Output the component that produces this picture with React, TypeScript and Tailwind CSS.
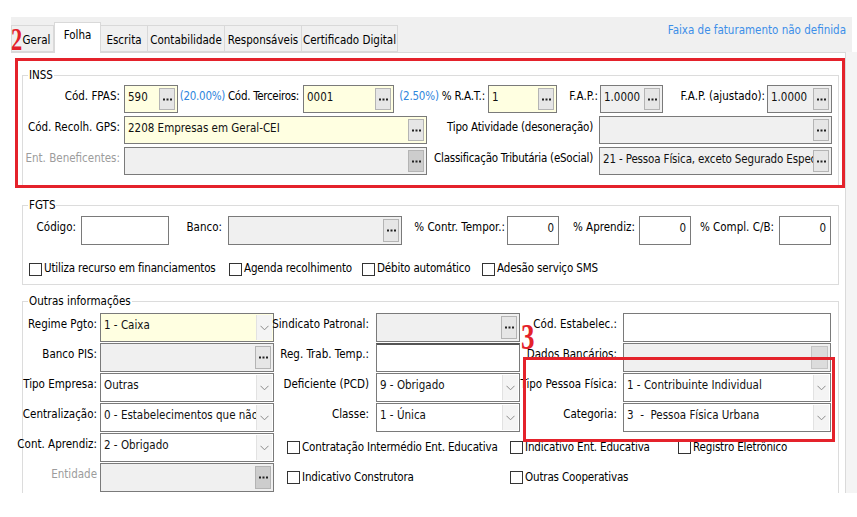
import React from "react";

type Kind = "yellow" | "white" | "off";
type Btn = "dots" | "dotsDark" | "arrow" | "blank" | undefined;

const bgMap: Record<Kind, string> = {
  yellow: "bg-[#ffffe1]",
  white: "bg-white",
  off: "bg-[#f0f0f0]",
};

function Dots() {
  return (
    <svg width="9" height="3" viewBox="0 0 9 3">
      <rect x="0" y="0.5" width="2" height="2" fill="#222" />
      <rect x="3.5" y="0.5" width="2" height="2" fill="#222" />
      <rect x="7" y="0.5" width="2" height="2" fill="#222" />
    </svg>
  );
}

function Chevron() {
  return (
    <svg width="9" height="6" viewBox="0 0 9 6">
      <polyline points="0.5,0.8 4.5,4.8 8.5,0.8" fill="none" stroke="#8a8a8a" strokeWidth="1" />
    </svg>
  );
}

function Field({
  className = "",
  kind = "white",
  value = "",
  btn,
  right,
}: {
  className?: string;
  kind?: Kind;
  value?: string;
  btn?: Btn;
  right?: boolean;
}) {
  return (
    <div className={`flex shrink-0 border border-[#7a7a7a] ${bgMap[kind]} ${className}`}>
      <div
        className={`min-w-0 flex-1 overflow-hidden whitespace-pre pl-[3px] pr-[4px] pt-[1px] leading-[20px] text-[#111] ${
          right ? "text-right" : ""
        }`}
      >
        {value}
      </div>
      {btn === "dots" && (
        <div className="my-[2px] mr-[2px] flex w-[16px] shrink-0 items-center justify-center border border-[#b4b4b4] bg-[#e6e6e6]">
          <Dots />
        </div>
      )}
      {btn === "dotsDark" && (
        <div className="my-[2px] mr-[2px] flex w-[16px] shrink-0 items-center justify-center border border-[#b4b4b4] bg-[#cdcdcd]">
          <Dots />
        </div>
      )}
      {btn === "blank" && (
        <div className="my-[2px] mr-[2px] w-[17px] shrink-0 border border-[#c4c4c4] bg-[#dcdcdc]" />
      )}
      {btn === "arrow" && (
        <div className="my-[1px] mr-[1px] flex w-[16px] shrink-0 items-center justify-center border-l border-[#e2e2e2] bg-[#f4f4f4]">
          <Chevron />
        </div>
      )}
    </div>
  );
}

function Label({
  className = "",
  dim,
  children,
}: {
  className?: string;
  dim?: boolean;
  children: React.ReactNode;
}) {
  return (
    <div
      className={`flex shrink-0 justify-end gap-[3px] whitespace-nowrap pt-[1px] leading-[21px] ${
        dim ? "text-[#9c9c9c]" : "text-black"
      } ${className}`}
    >
      {children}
    </div>
  );
}

function Check({ className = "", children }: { className?: string; children: React.ReactNode }) {
  return (
    <div className={`flex shrink-0 items-center whitespace-nowrap tracking-[-0.15px] ${className}`}>
      <div className="h-[13px] w-[13px] shrink-0 border border-[#333] bg-white" />
      <span className="ml-[2px] text-black">{children}</span>
    </div>
  );
}

const tabs = [
  { name: "Geral", w: "w-[43px] pl-[8px]" },
  { name: "Folha", w: "w-[47px]" },
  { name: "Escrita", w: "w-[47px]" },
  { name: "Contabilidade", w: "w-[77px]" },
  { name: "Responsáveis", w: "w-[77px]" },
  { name: "Certificado Digital", w: "w-[96px]" },
];

export default function App() {
  return (
    <div className="relative h-[517px] w-[857px] overflow-hidden bg-white font-['DejaVu_Sans_Condensed','Liberation_Sans',sans-serif] text-[11.5px] text-black">
      <div className="h-[17px]" />

      {/* tab strip */}
      <div className="relative z-10 ml-[11px] flex h-[35px] w-[841px] items-end bg-[#f0f0f0]">
        {tabs.map((t) =>
          t.name === "Folha" ? (
            <div
              key={t.name}
              className={`${t.w} -mb-[1px] flex h-[31px] shrink-0 justify-center whitespace-nowrap border border-b-0 border-[#d9d9d9] bg-white pt-[3px] leading-[18px]`}
            >
              {t.name}
            </div>
          ) : (
            <div
              key={t.name}
              className={`${t.w} flex h-[27px] shrink-0 justify-center whitespace-nowrap border border-l-0 border-[#d9d9d9] bg-[#f0f0f0] pt-[5px] leading-[18px] first:border-l`}
            >
              {t.name}
            </div>
          )
        )}
        <div className="ml-auto self-start whitespace-nowrap pr-[6px] pt-[5px] text-[#3c8ee8]">
          Faixa de faturamento não definida
        </div>
      </div>

      <div className="flex h-[441px]">
        <div className="ml-[11px] h-full w-[834px] shrink-0 overflow-hidden border-t border-[#d9d9d9] bg-white">
          {/* INSS */}
          <fieldset className="ml-[11px] mt-[14px] w-[817px] border border-[#dcdcdc] pb-[10px]">
            <legend className="ml-[5px] px-[1px] leading-[16px]">INSS</legend>
            <div className="flex flex-col gap-[3px] pt-[2px]">
              <div className="flex h-[28px]">
                <Label className="w-[97px]">Cód. FPAS:</Label>
                <Field className="ml-[4px] w-[54px]" kind="yellow" value="590" btn="dots" />
                <Label className="w-[121px] gap-[2px] tracking-[-0.3px]">
                  <span className="text-[#2f86dd]">(20.00%)</span>
                  <span>Cód. Terceiros:</span>
                </Label>
                <Field className="ml-[4px] w-[91px]" kind="yellow" value="0001" btn="dots" />
                <Label className="w-[91px] tracking-[-0.2px]">
                  <span className="text-[#2f86dd]">(2.50%)</span>
                  <span>% R.A.T.:</span>
                </Label>
                <Field className="ml-[3px] w-[69px]" kind="yellow" value="1" btn="dots" />
                <Label className="w-[41px]">F.A.P.:</Label>
                <Field className="ml-[2px] w-[63px]" kind="off" value="1.0000" btn="dots" />
                <Label className="w-[102px]">F.A.P. (ajustado):</Label>
                <Field className="ml-[2px] w-[65px]" kind="off" value="1.0000" btn="dots" />
              </div>
              <div className="flex h-[28px]">
                <Label className="w-[97px]">Cód. Recolh. GPS:</Label>
                <Field className="ml-[4px] w-[303px]" kind="yellow" value="2208 Empresas em Geral-CEI" btn="dots" />
                <Label className="w-[166px] tracking-[-0.2px]">Tipo Atividade (desoneração)</Label>
                <Field className="ml-[6px] w-[233px]" kind="off" btn="dots" />
              </div>
              <div className="flex h-[28px]">
                <Label className="w-[97px]" dim>
                  Ent. Beneficentes:
                </Label>
                <Field className="ml-[4px] w-[303px]" kind="off" btn="dotsDark" />
                <Label className="w-[166px] tracking-[-0.25px]">Classificação Tributária (eSocial)</Label>
                <Field
                  className="ml-[6px] w-[233px] tracking-[-0.15px]"
                  kind="off"
                  value="21 - Pessoa Física, exceto Segurado Especial"
                  btn="dots"
                />
              </div>
            </div>
          </fieldset>

          {/* FGTS */}
          <fieldset className="ml-[11px] mt-[11px] w-[817px] border border-[#dcdcdc] pb-[5px]">
            <legend className="ml-[5px] px-[1px] leading-[16px]">FGTS</legend>
            <div className="mt-[3px] flex h-[29px]">
              <Label className="w-[53px]">Código:</Label>
              <Field className="ml-[5px] w-[88px]" kind="white" />
              <Label className="w-[53px]">Banco:</Label>
              <Field className="ml-[6px] w-[174px]" kind="off" btn="dots" />
              <Label className="w-[103px]">% Contr. Tempor.:</Label>
              <Field className="ml-[2px] w-[52px]" kind="white" value="0" right />
              <Label className="w-[76px]">% Aprendiz:</Label>
              <Field className="ml-[4px] w-[52px]" kind="white" value="0" right />
              <Label className="w-[83px]">% Compl. C/B:</Label>
              <Field className="ml-[5px] w-[52px]" kind="white" value="0" right />
            </div>
            <div className="ml-[6px] mt-[14px] flex h-[20px]">
              <Check className="w-[200px]">Utiliza recurso em financiamentos</Check>
              <Check className="w-[133px]">Agenda recolhimento</Check>
              <Check className="w-[120px]">Débito automático</Check>
              <Check>Adesão serviço SMS</Check>
            </div>
          </fieldset>

          {/* Outras informações */}
          <fieldset className="ml-[11px] mt-[8px] w-[817px] border border-[#dcdcdc] pb-[10px]">
            <legend className="ml-[5px] px-[1px] leading-[16px]">Outras informações</legend>
            <div className="flex flex-col gap-[1px] pt-[4px]">
              <div className="flex h-[29px]">
                <Label className="w-[74px]">Regime Pgto:</Label>
                <Field className="ml-[3px] w-[174px]" kind="yellow" value="1 - Caixa" btn="arrow" />
                <Label className="w-[95px]">Sindicato Patronal:</Label>
                <Field className="ml-[7px] w-[144px]" kind="off" btn="dots" />
                <Label className="w-[97px]">Cód. Estabelec.:</Label>
                <Field className="ml-[6px] w-[208px]" kind="white" />
              </div>
              <div className="flex h-[29px]">
                <Label className="w-[74px]">Banco PIS:</Label>
                <Field className="ml-[3px] w-[174px]" kind="off" btn="dots" />
                <Label className="w-[95px]">Reg. Trab. Temp.:</Label>
                <Field className="ml-[7px] w-[144px] border-t-2 border-t-[#555]" kind="white" />
                <Label className="w-[97px]">Dados Bancários:</Label>
                <Field className="ml-[6px] w-[208px]" kind="off" btn="blank" />
              </div>
              <div className="flex h-[29px]">
                <Label className="w-[74px]">Tipo Empresa:</Label>
                <Field className="ml-[3px] w-[174px]" kind="white" value="Outras" btn="arrow" />
                <Label className="w-[95px]">Deficiente (PCD)</Label>
                <Field className="ml-[7px] w-[144px]" kind="white" value="9 - Obrigado" btn="arrow" />
                <Label className="w-[97px]">Tipo Pessoa Física:</Label>
                <Field className="ml-[6px] w-[208px]" kind="white" value="1 - Contribuinte Individual" btn="arrow" />
              </div>
              <div className="flex h-[29px]">
                <Label className="w-[74px]">Centralização:</Label>
                <Field
                  className="ml-[3px] w-[174px]"
                  kind="white"
                  value="0 - Estabelecimentos que não contribuem"
                  btn="arrow"
                />
                <Label className="w-[95px]">Classe:</Label>
                <Field className="ml-[7px] w-[144px]" kind="white" value="1 - Única" btn="arrow" />
                <Label className="w-[97px]">Categoria:</Label>
                <Field className="ml-[6px] w-[208px]" kind="white" value="3  -  Pessoa Física Urbana" btn="arrow" />
              </div>
              <div className="flex h-[29px] items-center">
                <Label className="w-[74px] self-start">Cont. Aprendiz:</Label>
                <Field className="ml-[3px] h-[29px] w-[174px]" kind="white" value="2 - Obrigado" btn="arrow" />
                <Check className="ml-[13px] w-[223px]">Contratação Intermédio Ent. Educativa</Check>
                <Check className="w-[168px]">Indicativo Ent. Educativa</Check>
                <Check>Registro Eletrônico</Check>
              </div>
              <div className="flex h-[29px] items-center">
                <Label className="w-[74px] self-start" dim>
                  Entidade
                </Label>
                <Field className="ml-[3px] h-[29px] w-[174px]" kind="off" btn="dotsDark" />
                <Check className="ml-[13px] w-[223px]">Indicativo Construtora</Check>
                <Check>Outras Cooperativas</Check>
              </div>
            </div>
          </fieldset>
        </div>
        <div className="h-full flex-1 border-l border-[#dadada] bg-[#f4f4f4]" />
      </div>

      {/* annotations */}
      <div className="pointer-events-none absolute left-[15px] top-[58px] h-[130px] w-[830px] border-[3px] border-[#e4222b]" />
      <div className="pointer-events-none absolute left-[523px] top-[357px] h-[85px] w-[312px] border-[3px] border-[#e4222b]" />
      <div className="pointer-events-none absolute left-[11px] top-[23px] z-20 origin-left scale-x-70 font-['Liberation_Serif',serif] text-[32px] font-bold leading-[32px] text-[#e4222b]">
        2
      </div>
      <div className="pointer-events-none absolute left-[521px] top-[319px] z-20 origin-left scale-x-75 font-['Liberation_Serif',serif] text-[36px] font-bold leading-[36px] text-[#e4222b]">
        3
      </div>
    </div>
  );
}
